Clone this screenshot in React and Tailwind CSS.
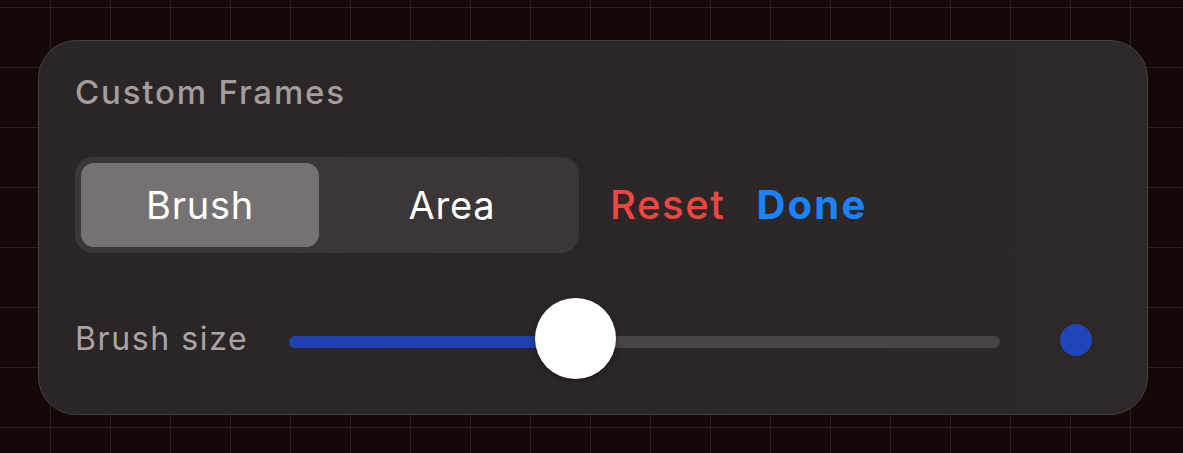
export default function App() {
  return (
    <div
      className="h-[453px] w-full overflow-hidden bg-[#140809] pl-[38px] pt-[40px] [background-image:linear-gradient(to_right,#2e1e21_1px,transparent_1px),linear-gradient(to_bottom,#2e1e21_1px,transparent_1px)] [background-size:60px_60px] [background-position:50px_7px]"
      style={{ fontFamily: "Inter, 'Noto Sans', sans-serif" }}
    >
      <div className="flex h-[375px] w-[1110px] flex-col rounded-[38px] border border-[#463e3f] bg-gradient-to-r from-[#2a2526] via-[#2c2627] to-[#2f2828] pl-[36px]">
        {/* title */}
        <div className="mt-[33px] h-[36px] text-[33px] font-medium leading-[36px] tracking-[0.055em] text-[#a39d9e]">
          Custom Frames
        </div>

        {/* mode toggle + actions */}
        <div className="mt-[47px] flex items-center">
          <div className="flex h-[96px] w-[504px] rounded-[18px] bg-[#3c3638] p-[6px]">
            <div className="flex w-[238px] items-center justify-center rounded-[13px] bg-[#767173] text-[38px] tracking-[0.02em] text-white">
              Brush
            </div>
            <div className="flex flex-1 items-center justify-center pl-[12px] text-[38px] tracking-[0.02em] text-white">
              Area
            </div>
          </div>
          <button className="ml-[31px] text-[40px] font-medium tracking-[0.04em] text-[#f0463f]">Reset</button>
          <button className="ml-[31px] text-[40px] font-bold tracking-[0.055em] text-[#1a84ff]">Done</button>
        </div>

        {/* brush size slider */}
        <div className="mt-[45px] flex h-[82px] items-center">
          <div className="w-[214px] text-[32px] tracking-[0.05em] text-[#aaa4a5]">Brush size</div>
          <div className="relative mt-[6px] h-[12px] w-[711px] rounded-full bg-[#4a4445]">
            <div className="h-full w-[286px] rounded-full bg-[#1e40b0]" />
            <div className="absolute left-[246px] top-[-38px] h-[81px] w-[81px] rounded-full bg-white shadow-[0_2px_6px_rgba(0,0,0,0.35)]" />
          </div>
          <div className="ml-[60px] mt-[2px] h-[32px] w-[32px] rounded-full bg-[#1f45b8]" />
        </div>
      </div>
    </div>
  );
}
